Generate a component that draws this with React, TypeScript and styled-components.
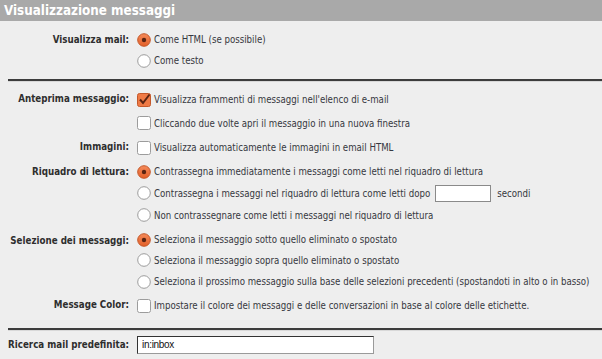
import React from 'react';
import styled, { createGlobalStyle } from 'styled-components';

const GlobalStyle = createGlobalStyle`
   body {
      margin: 0;
      background: #eeeeee;
      font-family: 'DejaVu Sans Condensed', 'DejaVu Sans', sans-serif;
   }
`;

const Page = styled.div`
   width: 602px;
   height: 359px;
   background: #eeeeee;
   overflow: hidden;
   color: #363840;
   font-size: 9.6px;
`;

const Header = styled.div`
   height: 21px;
   line-height: 21px;
   background: #a9a9a9;
   color: #fff;
   font-weight: bold;
   font-size: 13.3px;
   padding-left: 4px;
`;

const Section = styled.div`
   display: flex;
   flex-direction: column;
   padding: ${(p: { $pad: string }) => p.$pad};
`;

const Row = styled.div`
   display: grid;
   grid-template-columns: 129px 1fr;
   column-gap: 8px;
   margin-bottom: ${(p: { $gap?: number }) => p.$gap ?? 0}px;
`;

const Label = styled.div`
   text-align: right;
   font-weight: bold;
   font-size: 9.7px;
   color: #2e2e2e;
   line-height: 21px;
   white-space: nowrap;
`;

const Options = styled.div`
   display: flex;
   flex-direction: column;
`;

const Option = styled.div<{ $h?: number }>`
   display: flex;
   align-items: center;
   gap: 3px;
   height: ${(p) => p.$h ?? 21}px;
   white-space: nowrap;
`;

const Divider = styled.div`
   margin-left: 8px;
   height: 2px;
   background: #3c3c3c;
   border-bottom: 1px solid #d8d8d8;
`;

const SmallInput = styled.div`
   width: 54px;
   height: 15px;
   background: #fff;
   border: 1px solid #8a8a8a;
   margin: 0 3px 0 2px;
`;

const SearchInput = styled.div`
   width: 231px;
   height: 16px;
   background: #fff;
   border: 1px solid #9a9a9a;
   border-top-color: #333;
   border-left-color: #333;
   padding: 0 0 0 4px;
   line-height: 16px;
   color: #111;
   font-family: 'Liberation Sans', sans-serif;
   font-size: 10px;
   letter-spacing: -0.3px;
   margin-top: 2px;
`;

const Radio = ({ on }: { on?: boolean }) =>
   on ? (
      <svg width="14" height="14" viewBox="0 0 14 14">
         <defs>
            <linearGradient id="rg" x1="0" y1="0" x2="0" y2="1">
               <stop offset="0" stopColor="#f58a5a" />
               <stop offset="1" stopColor="#e25f28" />
            </linearGradient>
         </defs>
         <circle cx="7" cy="7" r="6.3" fill="url(#rg)" stroke="#c4582a" strokeWidth="1" />
         <circle cx="7" cy="7" r="2.2" fill="#5a2412" />
      </svg>
   ) : (
      <svg width="14" height="14" viewBox="0 0 14 14">
         <circle cx="7" cy="7" r="6.3" fill="#fff" stroke="#9c9c9c" strokeWidth="1" />
      </svg>
   );

const Check = ({ on }: { on?: boolean }) =>
   on ? (
      <svg width="14" height="14" viewBox="0 0 14 14" style={{ overflow: 'visible' }}>
         <rect x="0.5" y="0.5" width="13" height="13" rx="2" fill="#ef7a45" stroke="#c4582a" />
         <path d="M3 6.5 L6 10 L12.5 1.5" fill="none" stroke="#5a2412" strokeWidth="2" />
      </svg>
   ) : (
      <svg width="14" height="14" viewBox="0 0 14 14">
         <rect x="0.5" y="0.5" width="13" height="13" rx="2" fill="#fff" stroke="#9c9c9c" />
      </svg>
   );

export default function App() {
   return (
      <Page>
         <GlobalStyle />
         <Header>Visualizzazione messaggi</Header>
         <Section $pad="8px 0 8px">
            <Row>
               <Label>Visualizza mail:</Label>
               <Options>
                  <Option><Radio on />Come HTML (se possibile)</Option>
                  <Option><Radio />Come testo</Option>
               </Options>
            </Row>
         </Section>
         <Divider />
         <Section $pad="6px 0 11px">
            <Row $gap={1}>
               <Label>Anteprima messaggio:</Label>
               <Options>
                  <Option $h={23}><Check on />Visualizza frammenti di messaggi nell'elenco di e-mail</Option>
                  <Option $h={24}><Check />Cliccando due volte apri il messaggio in una nuova finestra</Option>
               </Options>
            </Row>
            <Row $gap={2}>
               <Label>Immagini:</Label>
               <Options>
                  <Option $h={23}><Check />Visualizza automaticamente le immagini in email HTML</Option>
               </Options>
            </Row>
            <Row $gap={4}>
               <Label>Riquadro di lettura:</Label>
               <Options>
                  <Option><Radio on />Contrassegna immediatamente i messaggi come letti nel riquadro di lettura</Option>
                  <Option $h={22}>
                     <Radio />Contrassegna i messaggi nel riquadro di lettura come letti dopo
                     <SmallInput />
                     secondi
                  </Option>
                  <Option $h={22}><Radio />Non contrassegnare come letti i messaggi nel riquadro di lettura</Option>
               </Options>
            </Row>
            <Row $gap={2}>
               <Label>Selezione dei messaggi:</Label>
               <Options>
                  <Option $h={19}><Radio on />Seleziona il messaggio sotto quello eliminato o spostato</Option>
                  <Option $h={22}><Radio />Seleziona il messaggio sopra quello eliminato o spostato</Option>
                  <Option><Radio />Seleziona il prossimo messaggio sulla base delle selezioni precedenti (spostandoti in alto o in basso)</Option>
               </Options>
            </Row>
            <Row>
               <Label>Message Color:</Label>
               <Options>
                  <Option $h={23}><Check />Impostare il colore dei messaggi e delle conversazioni in base al colore delle etichette.</Option>
               </Options>
            </Row>
         </Section>
         <Divider />
         <Section $pad="3px 0 0">
            <Row>
               <Label>Ricerca mail predefinita:</Label>
               <Options>
                  <SearchInput>in:inbox</SearchInput>
               </Options>
            </Row>
         </Section>
      </Page>
   );
}
